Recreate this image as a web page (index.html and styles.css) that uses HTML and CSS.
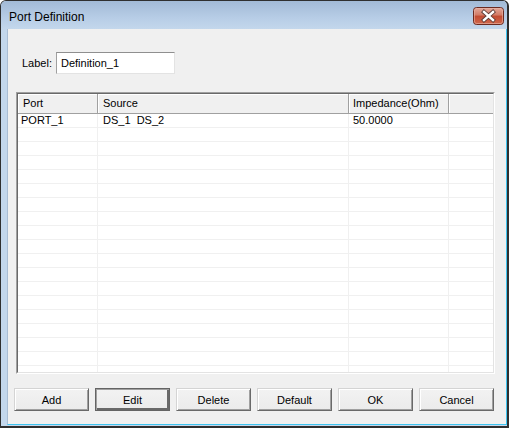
FILE: index.html
```html
<!DOCTYPE html>
<html>
<head>
<meta charset="utf-8">
<title>Port Definition</title>
<link rel="stylesheet" href="styles.css">
</head>
<body>
<div class="window">
  <div class="titlebar">
    <span class="title">Port Definition</span>
    <div class="close">
      <svg width="31" height="18" viewBox="0 0 31 18">
        <defs>
          <linearGradient id="cg" x1="0" y1="0" x2="0" y2="1">
            <stop offset="0" stop-color="#e3aa9c"/>
            <stop offset="0.45" stop-color="#d27a65"/>
            <stop offset="0.5" stop-color="#c24b32"/>
            <stop offset="1" stop-color="#d0694d"/>
          </linearGradient>
        </defs>
        <rect x="0.5" y="0.5" width="30" height="17" rx="3" ry="3" fill="url(#cg)" stroke="#6b2a20"/>
        <rect x="1.5" y="1.5" width="28" height="15" rx="2" ry="2" fill="none" stroke="#eab6a8" stroke-opacity="0.6"/>
        <path d="M11 5 L20 13 M20 5 L11 13" stroke="#5c3b36" stroke-width="4.2" stroke-linecap="square" fill="none"/>
        <path d="M11 5 L20 13 M20 5 L11 13" stroke="#ffffff" stroke-width="2.4" stroke-linecap="square" fill="none"/>
      </svg>
    </div>
  </div>
  <div class="frame">
    <div class="client">
      <div class="label-row">
        <span class="label-text">Label:</span>
        <div class="input">Definition_1</div>
      </div>
      <div class="table">
        <div class="table-inner">
          <div class="thead">
            <div class="th c1">Port</div>
            <div class="th c2">Source</div>
            <div class="th c3">Impedance(Ohm)</div>
            <div class="th c4"></div>
          </div>
          <div class="tbody">
            <div class="tr"><div class="td c1 first">PORT_1</div><div class="td c2 src">DS_1  DS_2</div><div class="td c3">50.0000</div><div class="td c4"></div></div>
            <div class="tr"><div class="td c1"></div><div class="td c2"></div><div class="td c3"></div><div class="td c4"></div></div>
            <div class="tr"><div class="td c1"></div><div class="td c2"></div><div class="td c3"></div><div class="td c4"></div></div>
            <div class="tr"><div class="td c1"></div><div class="td c2"></div><div class="td c3"></div><div class="td c4"></div></div>
            <div class="tr"><div class="td c1"></div><div class="td c2"></div><div class="td c3"></div><div class="td c4"></div></div>
            <div class="tr"><div class="td c1"></div><div class="td c2"></div><div class="td c3"></div><div class="td c4"></div></div>
            <div class="tr"><div class="td c1"></div><div class="td c2"></div><div class="td c3"></div><div class="td c4"></div></div>
            <div class="tr"><div class="td c1"></div><div class="td c2"></div><div class="td c3"></div><div class="td c4"></div></div>
            <div class="tr"><div class="td c1"></div><div class="td c2"></div><div class="td c3"></div><div class="td c4"></div></div>
            <div class="tr"><div class="td c1"></div><div class="td c2"></div><div class="td c3"></div><div class="td c4"></div></div>
            <div class="tr"><div class="td c1"></div><div class="td c2"></div><div class="td c3"></div><div class="td c4"></div></div>
            <div class="tr"><div class="td c1"></div><div class="td c2"></div><div class="td c3"></div><div class="td c4"></div></div>
            <div class="tr"><div class="td c1"></div><div class="td c2"></div><div class="td c3"></div><div class="td c4"></div></div>
            <div class="tr"><div class="td c1"></div><div class="td c2"></div><div class="td c3"></div><div class="td c4"></div></div>
            <div class="tr"><div class="td c1"></div><div class="td c2"></div><div class="td c3"></div><div class="td c4"></div></div>
            <div class="tr"><div class="td c1"></div><div class="td c2"></div><div class="td c3"></div><div class="td c4"></div></div>
            <div class="tr"><div class="td c1"></div><div class="td c2"></div><div class="td c3"></div><div class="td c4"></div></div>
            <div class="tr"><div class="td c1"></div><div class="td c2"></div><div class="td c3"></div><div class="td c4"></div></div>
            <div class="tr"><div class="td c1"></div><div class="td c2"></div><div class="td c3"></div><div class="td c4"></div></div>
            <div class="tr"><div class="td c1"></div><div class="td c2"></div><div class="td c3"></div><div class="td c4"></div></div>
          </div>
        </div>
      </div>
      <div class="buttons">
        <div class="btn">Add</div>
        <div class="btn default">Edit</div>
        <div class="btn">Delete</div>
        <div class="btn">Default</div>
        <div class="btn">OK</div>
        <div class="btn">Cancel</div>
      </div>
    </div>
  </div>
</div>
</body>
</html>
```
FILE: styles.css
```css
html, body {
  margin: 0;
  padding: 0;
  background: #ffffff;
}
body {
  font-family: "Liberation Sans", Arial, sans-serif;
  font-size: 11px;
  color: #000;
}
.window {
  width: 509px;
  height: 428px;
  box-sizing: border-box;
  border: 1px solid #2f2f2f;
  border-right-width: 2px;
  border-bottom-width: 2px;
  border-radius: 6px 6px 0 0;
  background: #c3d7ec;
  display: flex;
  flex-direction: column;
  overflow: hidden;
}
.titlebar {
  height: 28px;
  flex: none;
  display: flex;
  align-items: flex-start;
  justify-content: space-between;
  padding: 0 3px 0 8px;
  background: linear-gradient(#a2bad6, #b7cde6 60%, #c3d7ec);
}
.title {
  font-size: 12px;
  line-height: 12px;
  margin-top: 10px;
  color: #000;
}
.close {
  width: 31px;
  height: 18px;
  margin-top: 6px;
}
.close svg {
  display: block;
}
.frame {
  flex: 1;
  display: flex;
  padding: 0 0 1px 6px;
}
.client {
  flex: 1;
  background: #f0f0f0;
  border-left: 1px solid #a9bdd4;
  border-right: 1px solid #3ec4ef;
  border-bottom: 1px solid #3ec4ef;
  display: flex;
  flex-direction: column;
}
.label-row {
  display: flex;
  align-items: center;
  gap: 4px;
  margin: 23px 0 0 14px;
}
.label-text {
  width: 30px;
}
.input {
  width: 119px;
  height: 22px;
  box-sizing: border-box;
  background: #fff;
  border: 1px solid #e3e3e3;
  border-top-color: #8f8f8f;
  border-left-color: #a0a0a0;
  padding: 4px 0 0 4px;
  line-height: 13px;
}
.table {
  margin: 18px 0 0 8px;
  width: 479px;
  height: 282px;
  box-sizing: border-box;
  border: 1px solid #ffffff;
  border-top-color: #a0a0a0;
  border-left-color: #a0a0a0;
}
.table-inner {
  height: 100%;
  box-sizing: border-box;
  border: 1px solid #e3e3e3;
  border-top-color: #696969;
  border-left-color: #696969;
  background: #fff;
  display: flex;
  flex-direction: column;
  overflow: hidden;
}
.thead {
  display: flex;
  height: 20px;
  flex: none;
  box-sizing: border-box;
  border-bottom: 1px solid #a0a0a0;
  background: #f0f0f0;
}
.th {
  box-sizing: border-box;
  height: 19px;
  line-height: 19px;
  padding-left: 5px;
  border-right: 1px solid #a0a0a0;
  box-shadow: inset 1px 1px 0 #ffffff;
  white-space: nowrap;
}
.th.c3 {
  padding-left: 4px;
}
.th.c4 {
  border-right: none;
}
.c1 { width: 80px; flex: none; }
.c2 { width: 251px; flex: none; }
.c3 { width: 100px; flex: none; }
.c4 { flex: 1; }
.tbody {
  flex: 1;
  overflow: hidden;
}
.tr {
  display: flex;
  height: 14px;
  box-sizing: border-box;
  border-bottom: 1px solid #f0f0f0;
}
.td {
  box-sizing: border-box;
  height: 13px;
  line-height: 13px;
  padding-left: 5px;
  border-right: 1px solid #f0f0f0;
  white-space: pre;
}
.td.first {
  padding-left: 3px;
}
.td.c3 {
  padding-left: 4px;
}
.td.c4 {
  border-right: none;
}
.buttons {
  display: flex;
  gap: 6px;
  margin: 14px 0 0 6px;
}
.btn {
  width: 75px;
  height: 23px;
  box-sizing: border-box;
  display: flex;
  align-items: center;
  justify-content: center;
  background: linear-gradient(#f2f2f2, #ebebeb);
  border: 1px solid #d4d4d4;
  border-right-color: #696969;
  border-bottom-color: #696969;
  box-shadow: inset 1px 1px 0 #ffffff, inset -1px -1px 0 #a0a0a0;
}
.btn.default {
  border: 1px solid #646464;
  box-shadow: inset 1px 1px 0 #a0a0a0, inset -2px -2px 0 #696969;
}
```
